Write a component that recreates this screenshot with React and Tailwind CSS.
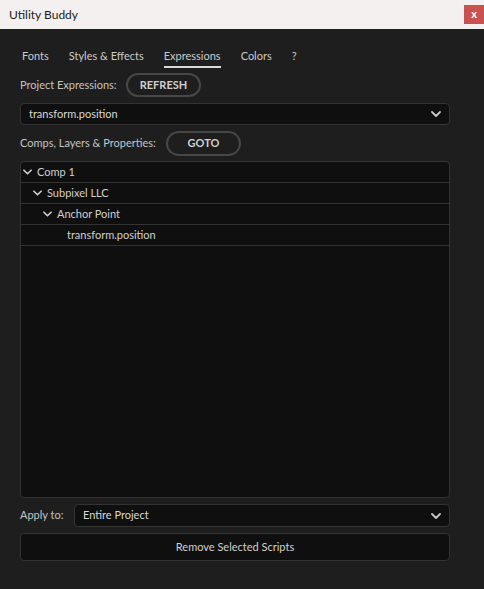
import React from "react";

const Chevron = ({ className = "" }) => (
  <svg viewBox="0 0 10 6" className={className} fill="none" stroke="currentColor" strokeWidth="1.8" strokeLinecap="round" strokeLinejoin="round">
    <path d="M1 1 L5 5 L9 1" />
  </svg>
);

const Row = ({ indent, chevron, label }) => (
  <div className="h-[21px] flex items-center border-b border-[#333333] text-[11px] text-[#d0d0d0] whitespace-nowrap" style={{ paddingLeft: indent }}>
    {chevron ? <Chevron className="w-[9px] h-[6px] text-[#d0d0d0] mr-[5px]" /> : null}
    <span>{label}</span>
  </div>
);

export default function App() {
  return (
    <div className="w-[484px] h-[589px] flex flex-col bg-[#1e1e1e] overflow-hidden whitespace-nowrap" style={{ fontFamily: 'Lato, "Noto Sans", sans-serif' }}>
      <div className="h-[29px] bg-[#f5f0f0] flex items-center justify-between shrink-0">
        <span className="pl-[9px] text-[12px] text-[#1a1a1a]">Utility Buddy</span>
        <div className="w-[20px] h-[19px] bg-[#c9514f] flex items-center justify-center text-white text-[11px] font-bold leading-none mb-[1px] pb-[2px]">x</div>
      </div>
      <div className="flex-1 flex flex-col pl-[20px] pr-[34px]">
        <div className="flex gap-[20px] pl-[2px] pt-[19px] text-[11px] text-[#cacaca] h-[42px] leading-[16px]">
          <span>Fonts</span>
          <span>Styles &amp; Effects</span>
          <span className="relative">
            Expressions
            <span className="absolute left-0 right-0 top-[18px] h-[2px] bg-[#d8d8d8]" />
          </span>
          <span>Colors</span>
          <span>?</span>
        </div>
        <div className="flex items-center h-[24px] mt-[2px]">
          <span className="text-[11px] text-[#c4c4c4] w-[106px] shrink-0">Project Expressions:</span>
          <button className="w-[75px] h-[24px] rounded-full border-2 border-[#474747] text-[11px] font-bold text-[#cfcfcf]">REFRESH</button>
        </div>
        <div className="mt-[6px] h-[22px] bg-[#0f0f0f] border border-[#333333] rounded-[4px] flex items-center justify-between pl-[8px] pr-[8px]">
          <span className="text-[11px] text-[#d8d8d8]">transform.position</span>
          <Chevron className="w-[10px] h-[6px] text-[#c8c8c8]" />
        </div>
        <div className="flex items-center h-[25px] mt-[6px]">
          <span className="text-[11px] text-[#c4c4c4] w-[146px] shrink-0">Comps, Layers &amp; Properties:</span>
          <button className="w-[75px] h-[25px] rounded-full border-2 border-[#474747] text-[11px] font-bold text-[#cfcfcf]">GOTO</button>
        </div>
        <div className="mt-[5px] h-[337px] bg-[#0f0f0f] border border-[#333333] rounded-[4px] overflow-hidden">
          <Row indent={2} chevron label="Comp 1" />
          <Row indent={12} chevron label="Subpixel LLC" />
          <Row indent={22} chevron label="Anchor Point" />
          <Row indent={46} label="transform.position" />
        </div>
        <div className="flex items-center h-[23px] mt-[6px]">
          <span className="text-[11px] text-[#c4c4c4] w-[54px] shrink-0">Apply to:</span>
          <div className="flex-1 h-[23px] bg-[#0f0f0f] border border-[#333333] rounded-[4px] flex items-center justify-between pl-[8px] pr-[8px]">
            <span className="text-[11px] text-[#d8d8d8]">Entire Project</span>
            <Chevron className="w-[10px] h-[6px] text-[#c8c8c8]" />
          </div>
        </div>
        <div className="mt-[6px] h-[28px] bg-[#0f0f0f] border border-[#333333] rounded-[4px] flex items-center justify-center text-[11px] text-[#d0d0d0]">
          Remove Selected Scripts
        </div>
      </div>
    </div>
  );
}
